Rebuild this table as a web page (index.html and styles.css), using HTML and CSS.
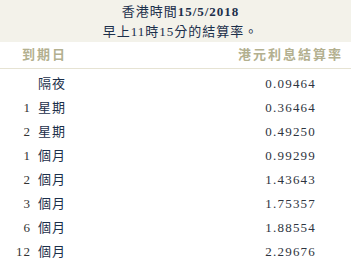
FILE: index.html
```html
<!DOCTYPE html>
<html>
<head>
<meta charset="utf-8">
<link rel="stylesheet" href="styles.css">
</head>
<body>
<div class="title">
  <div class="t1">香港時間<b>15/5/2018</b></div>
  <div class="t2">早上11時15分的結算率。</div>
</div>
<div class="table">
  <div class="head">
    <div class="hl">到期日</div>
    <div class="hr">港元利息結算率</div>
  </div>
  <div class="rows">
    <div class="row"><div class="lab"><span class="n"></span><span class="u">隔夜</span></div><div class="val">0.09464</div></div>
    <div class="row"><div class="lab"><span class="n">1</span><span class="u">星期</span></div><div class="val">0.36464</div></div>
    <div class="row"><div class="lab"><span class="n">2</span><span class="u">星期</span></div><div class="val">0.49250</div></div>
    <div class="row"><div class="lab"><span class="n">1</span><span class="u">個月</span></div><div class="val">0.99299</div></div>
    <div class="row"><div class="lab"><span class="n">2</span><span class="u">個月</span></div><div class="val">1.43643</div></div>
    <div class="row"><div class="lab"><span class="n">3</span><span class="u">個月</span></div><div class="val">1.75357</div></div>
    <div class="row"><div class="lab"><span class="n">6</span><span class="u">個月</span></div><div class="val">1.88554</div></div>
    <div class="row"><div class="lab"><span class="n">12</span><span class="u">個月</span></div><div class="val">2.29676</div></div>
  </div>
</div>
</body>
</html>
```
FILE: styles.css
```css
html, body {
  margin: 0;
  padding: 0;
  background: #ffffff;
}
body {
  width: 351px;
  height: 268px;
  overflow: hidden;
  font-family: "Liberation Serif", "Noto Sans CJK TC", serif;
  font-size: 13px;
  color: #1b2f4a;
  letter-spacing: 1px;
}
.title {
  background: #f3f2ea;
  text-align: center;
  padding: 2px 0 2px 10px;
  height: 38px;
}
.t1, .t2 {
  height: 20px;
  line-height: 20px;
}
.t1 b {
  font-weight: bold;
}
.table {
  display: flex;
  flex-direction: column;
}
.head {
  display: flex;
  justify-content: space-between;
  height: 26px;
  line-height: 26px;
  border-bottom: 1px solid #e6e3d3;
  color: #b3b08f;
  font-weight: bold;
  padding: 0 8px 0 22px;
  letter-spacing: 2px;
}
.rows {
  display: flex;
  flex-direction: column;
  padding-top: 3px;
}
.row {
  display: flex;
  justify-content: space-between;
  height: 24px;
  line-height: 24px;
  padding: 0 35px 0 0;
}
.lab {
  display: flex;
  gap: 7px;
}
.n {
  width: 31px;
  text-align: right;
  color: #333;
}
.u {
  color: #1b2f4a;
}
.val {
  color: #2e3440;
  letter-spacing: 1.2px;
}
```
